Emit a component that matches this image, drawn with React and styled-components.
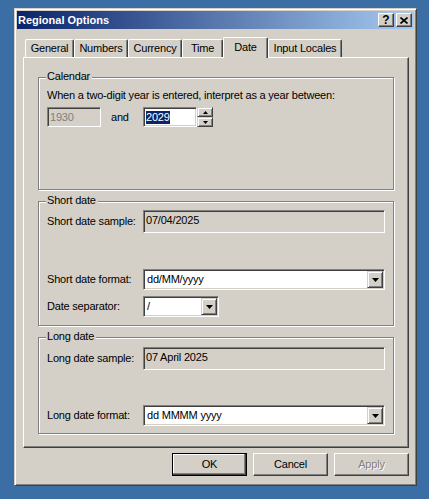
import React from 'react'
import styled, { createGlobalStyle } from 'styled-components'

const face = '#D4D0C8'
const shadow = '#808080'
const dark = '#404040'

const GlobalStyle = createGlobalStyle`
  html, body {
    margin: 0;
    padding: 0;
  }
  body {
    background: #3A6EA5;
    font-family: "Liberation Sans", Arial, sans-serif;
    font-size: 11px;
    line-height: 13px;
    letter-spacing: -0.2px;
    color: #000;
    width: 429px;
    height: 499px;
    overflow: hidden;
  }
`

const Desktop = styled.div`
  padding: 8px 0 0 14px;
`

const Window = styled.div`
  box-sizing: border-box;
  width: 403px;
  height: 478px;
  background: ${face};
  border: 1px solid;
  border-color: ${face} ${dark} ${dark} ${face};
  box-shadow: inset 1px 1px #fff, inset -1px -1px ${shadow};
  padding: 2px;
  display: flex;
  flex-direction: column;
`

const TitleBar = styled.div`
  height: 18px;
  display: flex;
  align-items: center;
  gap: 2px;
  padding: 0 2px 0 1px;
  background: linear-gradient(to right, #0A246A, #A6CAF0);
  color: #fff;
  font-weight: bold;
  letter-spacing: 0;
`

const Title = styled.span`
  flex: 1;
`

const CaptionButton = styled.div`
  box-sizing: border-box;
  width: 16px;
  height: 14px;
  background: ${face};
  border: 1px solid;
  border-color: #fff ${dark} ${dark} #fff;
  box-shadow: inset -1px -1px ${shadow};
  display: flex;
  align-items: center;
  justify-content: center;
  color: #000;
  font-size: 12px;
  font-weight: bold;
  line-height: 12px;
`

const TabRow = styled.div`
  display: flex;
  align-items: flex-end;
  height: 20px;
  margin-top: 8px;
  padding-left: 8px;
  position: relative;
  z-index: 1;
`

const Tab = styled.div`
  box-sizing: border-box;
  width: ${(p) => p.$w}px;
  height: ${(p) => (p.$active ? 21 : 18)}px;
  margin-bottom: ${(p) => (p.$active ? -1 : 0)}px;
  padding-bottom: ${(p) => (p.$active ? 2 : 0)}px;
  background: ${face};
  border-left: 1px solid #fff;
  border-top: 1px solid #fff;
  border-right: 1px solid ${dark};
  box-shadow: inset -1px 0 ${shadow};
  border-radius: 2px 2px 0 0;
  display: flex;
  align-items: center;
  justify-content: center;
  white-space: nowrap;
`

const Panel = styled.div`
  box-sizing: border-box;
  width: 386px;
  height: 391px;
  margin-left: 6px;
  border: 1px solid;
  border-color: #fff ${dark} ${dark} #fff;
  box-shadow: inset -1px -1px ${shadow};
  padding: 19px 14px 13px 14px;
  display: flex;
  flex-direction: column;
  gap: 11px;
`

const Group = styled.div`
  position: relative;
  box-sizing: border-box;
  height: ${(p) => p.$h}px;
  border: 1px solid ${shadow};
  box-shadow: inset 1px 1px #fff, 1px 1px #fff;
  padding: ${(p) => p.$pad};
  display: flex;
  flex-direction: column;
`

const Legend = styled.span`
  position: absolute;
  top: -8px;
  left: 7px;
  padding: 0 2px 0 1px;
  background: ${face};
`

const Note = styled.div`
  margin-bottom: 5px;
  white-space: nowrap;
`

const YearRow = styled.div`
  display: flex;
  align-items: center;
`

const AndLabel = styled.span`
  width: 42px;
  box-sizing: border-box;
  padding-left: 10px;
`

const Sunken = styled.div`
  box-sizing: border-box;
  width: ${(p) => p.$w}px;
  height: ${(p) => p.$h}px;
  border: 1px solid;
  border-color: ${shadow} #fff #fff ${shadow};
  box-shadow: inset 1px 1px ${dark}, inset -1px -1px ${face};
  background: ${(p) => (p.$white ? '#fff' : face)};
  color: ${(p) => (p.$disabled ? shadow : '#000')};
  padding: ${(p) => p.$pad || '3px 2px 0'};
  display: flex;
  align-items: ${(p) => (p.$top ? 'flex-start' : 'center')};
  white-space: nowrap;
`

const Selection = styled.span`
  background: #0A246A;
  color: #fff;
  line-height: 13px;
`

const Spinner = styled.div`
  display: flex;
  flex-direction: column;
  width: 16px;
  height: 20px;
`

const SpinButton = styled.div`
  box-sizing: border-box;
  height: 10px;
  background: ${face};
  border: 1px solid;
  border-color: ${face} ${dark} ${dark} ${face};
  box-shadow: inset 1px 1px #fff, inset -1px -1px ${shadow};
  display: flex;
  align-items: center;
  justify-content: center;
`

const FieldRow = styled.div`
  display: flex;
  align-items: center;
  margin-top: ${(p) => p.$mt || 0}px;
`

const FieldLabel = styled.span`
  width: 96px;
  flex: none;
  white-space: nowrap;
`

const ComboText = styled.span`
  flex: 1;
`

const DropButton = styled.div`
  box-sizing: border-box;
  width: 16px;
  height: 17px;
  margin-right: -1px;
  background: ${face};
  border: 1px solid;
  border-color: ${face} ${dark} ${dark} ${face};
  box-shadow: inset 1px 1px #fff, inset -1px -1px ${shadow};
  display: flex;
  align-items: center;
  justify-content: center;
`

const ButtonRow = styled.div`
  display: flex;
  justify-content: flex-end;
  gap: 6px;
  margin-top: 5px;
  padding-right: 5px;
`

const Button = styled.div`
  box-sizing: border-box;
  width: 75px;
  height: 23px;
  background: ${face};
  border: 1px solid;
  border-color: ${(p) => (p.$default ? '#000' : `#fff ${dark} ${dark} #fff`)};
  box-shadow: ${(p) =>
    p.$default
      ? `inset -1px -1px ${dark}, inset -2px -2px ${shadow}, inset 1px 1px #fff`
      : `inset -1px -1px ${shadow}`};
  display: flex;
  align-items: center;
  justify-content: center;
  color: ${(p) => (p.$disabled ? shadow : '#000')};
  text-shadow: ${(p) => (p.$disabled ? '1px 1px #fff' : 'none')};
`

const DownArrow = () => (
  <svg width="7" height="4" viewBox="0 0 7 4">
    <path d="M0 0h7L3.5 4z" fill="#000" />
  </svg>
)

const Combo = ({ w, value }) => (
  <Sunken $w={w} $h={21} $white $pad="0 2px 0 3px">
    <ComboText>{value}</ComboText>
    <DropButton>
      <DownArrow />
    </DropButton>
  </Sunken>
)

const tabs = [
  ['General', 49],
  ['Numbers', 54],
  ['Currency', 54],
  ['Time', 41],
  ['Date', 45, true],
  ['Input Locales', 74],
]

export default function App() {
  return (
    <>
      <GlobalStyle />
      <Desktop>
        <Window>
          <TitleBar>
            <Title>Regional Options</Title>
            <CaptionButton>?</CaptionButton>
            <CaptionButton>
              <svg width="8" height="7" viewBox="0 0 8 7">
                <path d="M0.5 0.5L7.5 6.5M7.5 0.5L0.5 6.5" stroke="#000" strokeWidth="1.6" />
              </svg>
            </CaptionButton>
          </TitleBar>

          <TabRow>
            {tabs.map(([label, w, active]) => (
              <Tab key={label} $w={w} $active={active}>
                {label}
              </Tab>
            ))}
          </TabRow>

          <Panel>
            <Group $h={113} $pad="11px 8px">
              <Legend>Calendar</Legend>
              <Note>When a two-digit year is entered, interpret as a year between:</Note>
              <YearRow>
                <Sunken $w={54} $h={20} $disabled $pad="0 0 0 2px">
                  1930
                </Sunken>
                <AndLabel>and</AndLabel>
                <Sunken $w={54} $h={20} $white $pad="0 0 0 2px">
                  <Selection>2029</Selection>
                </Sunken>
                <Spinner>
                  <SpinButton>
                    <svg width="5" height="3" viewBox="0 0 5 3">
                      <path d="M2.5 0L5 3H0z" fill="#000" />
                    </svg>
                  </SpinButton>
                  <SpinButton>
                    <svg width="5" height="3" viewBox="0 0 5 3">
                      <path d="M0 0h5L2.5 3z" fill="#000" />
                    </svg>
                  </SpinButton>
                </Spinner>
              </YearRow>
            </Group>

            <Group $h={125} $pad="8px 8px">
              <Legend>Short date</Legend>
              <FieldRow>
                <FieldLabel>Short date sample:</FieldLabel>
                <Sunken $w={243} $h={23} $top>
                  07/04/2025
                </Sunken>
              </FieldRow>
              <FieldRow $mt={36}>
                <FieldLabel>Short date format:</FieldLabel>
                <Combo w={243} value="dd/MM/yyyy" />
              </FieldRow>
              <FieldRow $mt={6}>
                <FieldLabel>Date separator:</FieldLabel>
                <Combo w={76} value="/" />
              </FieldRow>
            </Group>

            <Group $h={97} $pad="9px 8px">
              <Legend>Long date</Legend>
              <FieldRow>
                <FieldLabel>Long date sample:</FieldLabel>
                <Sunken $w={243} $h={23} $top>
                  07 April 2025
                </Sunken>
              </FieldRow>
              <FieldRow $mt={35}>
                <FieldLabel>Long date format:</FieldLabel>
                <Combo w={243} value="dd MMMM yyyy" />
              </FieldRow>
            </Group>
          </Panel>

          <ButtonRow>
            <Button $default>OK</Button>
            <Button>Cancel</Button>
            <Button $disabled>Apply</Button>
          </ButtonRow>
        </Window>
      </Desktop>
    </>
  )
}
